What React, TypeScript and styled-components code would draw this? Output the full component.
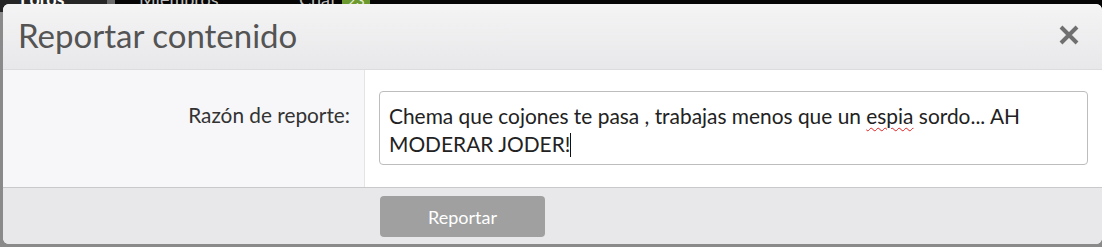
import styled, { createGlobalStyle } from "styled-components";

const GlobalStyle = createGlobalStyle`
  html, body {
    margin: 0;
    padding: 0;
    width: 1102px;
    height: 247px;
    overflow: hidden;
    font-family: Lato, "Open Sans", "Liberation Sans", sans-serif;
  }
`;

const Page = styled.div`
  position: relative;
  width: 1102px;
  height: 247px;
  background: #8a8a8a;
  overflow: hidden;
`;

const NavBar = styled.div`
  display: flex;
  height: 12px;
  background: #050505;
  overflow: hidden;
`;

const NavItem = styled.div<{ $active?: boolean; $width: number }>`
  width: ${(p) => p.$width}px;
  padding-left: ${(p) => (p.$active ? 20 : 24)}px;
  box-sizing: border-box;
  background: ${(p) => (p.$active ? "#262626" : "transparent")};
  border-right: ${(p) => (p.$active ? "8px solid #6a6a6a" : "none")};
  color: ${(p) => (p.$active ? "#fff" : "#bdbdbd")};
  font-weight: ${(p) => (p.$active ? 700 : 400)};
  font-size: 18px;
  line-height: 1;
  margin-top: -10px;
  display: flex;
  align-items: flex-start;
  gap: 6px;
`;

const Badge = styled.span`
  background: #6d9a2e;
  color: #e6f0d8;
  padding: 0 5px;
  font-size: 15px;
  line-height: 20px;
`;

const Modal = styled.div`
  position: absolute;
  left: 3px;
  top: 4px;
  width: 1099px;
  height: 240px;
  border-radius: 6px;
  overflow: hidden;
  display: flex;
  flex-direction: column;
  background: #fff;
`;

const Header = styled.div`
  height: 65px;
  flex-shrink: 0;
  display: flex;
  align-items: center;
  justify-content: space-between;
  padding: 0 22px 0 15px;
  background: linear-gradient(#f4f4f5, #e8e8ea);
  border-bottom: 1px solid #dcdcde;
`;

const Title = styled.div`
  font-size: 33px;
  color: #545454;
  padding-bottom: 4px;
`;

const Close = styled.div`
  width: 22px;
  height: 22px;
  color: #707070;
  margin-top: -4px;
`;

const Body = styled.div`
  display: grid;
  grid-template-columns: 362px 1fr;
  height: 117px;
  flex-shrink: 0;
`;

const LabelCell = styled.div`
  background: #f7f7f9;
  border-right: 1px solid #e4e4e6;
  display: flex;
  justify-content: flex-end;
  padding: 32px 14px 0 0;
  font-size: 20.8px;
  color: #333;
`;

const FieldCell = styled.div`
  padding: 21px 14px 0 14px;
`;

const TextBox = styled.div`
  height: 74px;
  border: 1px solid #bdbdbd;
  border-radius: 4px;
  padding: 10px 40px 0 9px;
  font-size: 20.9px;
  line-height: 28px;
  color: #222;
  box-sizing: border-box;
`;

const Misspelled = styled.span`
  text-decoration: underline wavy #e02020;
  text-decoration-thickness: 1px;
  text-underline-offset: 3px;
`;

const Caret = styled.span`
  display: inline-block;
  width: 1px;
  height: 24px;
  background: #111;
  vertical-align: -5px;
`;

const Footer = styled.div`
  flex: 1;
  background: #e8e8ea;
  border-top: 1px solid #c9c9cb;
  padding: 8px 0 0 377px;
`;

const SubmitButton = styled.button`
  width: 165px;
  height: 41px;
  border: none;
  border-radius: 4px;
  background: #a0a0a0;
  color: #fff;
  font-family: inherit;
  font-size: 18px;
`;

export default function App() {
  return (
    <Page>
      <GlobalStyle />
      <NavBar>
        <NavItem $active $width={115}>Foros</NavItem>
        <NavItem $width={160}>Miembros</NavItem>
        <NavItem $width={200}>
          Chat <Badge>23</Badge>
        </NavItem>
      </NavBar>
      <Modal>
        <Header>
          <Title>Reportar contenido</Title>
          <Close>
            <svg viewBox="0 0 22 22" width="22" height="22">
              <path d="M3 3 L19 19 M19 3 L3 19" stroke="currentColor" strokeWidth="4" />
            </svg>
          </Close>
        </Header>
        <Body>
          <LabelCell>Razón de reporte:</LabelCell>
          <FieldCell>
            <TextBox>
              Chema que cojones te pasa , trabajas menos que un <Misspelled>espia</Misspelled> sordo... AH
              MODERAR JODER!
              <Caret />
            </TextBox>
          </FieldCell>
        </Body>
        <Footer>
          <SubmitButton>Reportar</SubmitButton>
        </Footer>
      </Modal>
    </Page>
  );
}
